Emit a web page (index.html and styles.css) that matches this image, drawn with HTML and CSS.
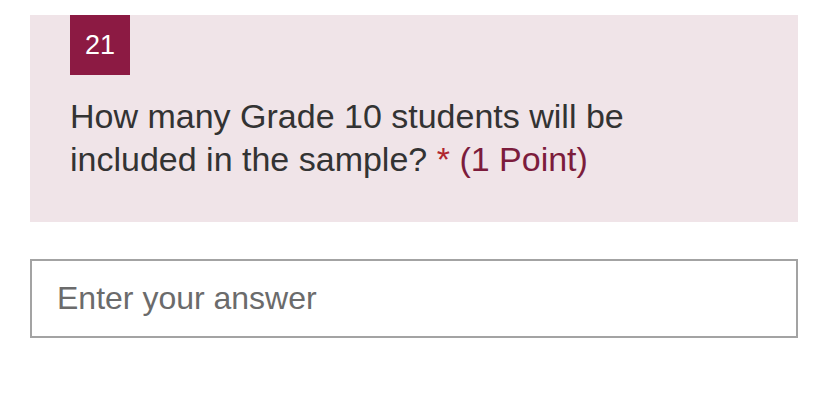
FILE: index.html
```html
<!DOCTYPE html>
<html>
<head>
<meta charset="utf-8">
<link rel="stylesheet" href="styles.css">
</head>
<body>
<div class="page">
  <div class="question">
    <div class="badge">21</div>
    <div class="title">How many Grade 10 students will be included in the sample? <span class="req">*</span> <span class="points">(1 Point)</span></div>
  </div>
  <div class="answer">
    <input class="field" type="text" placeholder="Enter your answer">
  </div>
</div>
</body>
</html>
```
FILE: styles.css
```css
html, body {
  margin: 0;
  padding: 0;
  background: #ffffff;
}
.page {
  padding: 15px 30px 0 30px;
  font-family: "Liberation Sans", Arial, sans-serif;
}
.question {
  background: #f0e4e8;
  padding: 0 40px 0 40px;
  height: 207px;
  box-sizing: border-box;
}
.badge {
  width: 60px;
  height: 60px;
  background: #8c1a43;
  color: #ffffff;
  font-size: 27px;
  display: flex;
  align-items: center;
  justify-content: center;
}
.title {
  margin-top: 20px;
  max-width: 640px;
  font-size: 34px;
  line-height: 43px;
  color: #333333;
}
.req {
  color: #b0262f;
}
.points {
  color: #7c1c3c;
}
.answer {
  margin-top: 37px;
}
.field {
  display: block;
  width: 100%;
  height: 79px;
  box-sizing: border-box;
  border: 2px solid #a3a3a3;
  padding: 0 25px;
  font-family: "Liberation Sans", Arial, sans-serif;
  font-size: 32px;
  color: #333;
  background: #fff;
  outline: none;
}
.field::placeholder {
  color: #6b6b6b;
}
```
